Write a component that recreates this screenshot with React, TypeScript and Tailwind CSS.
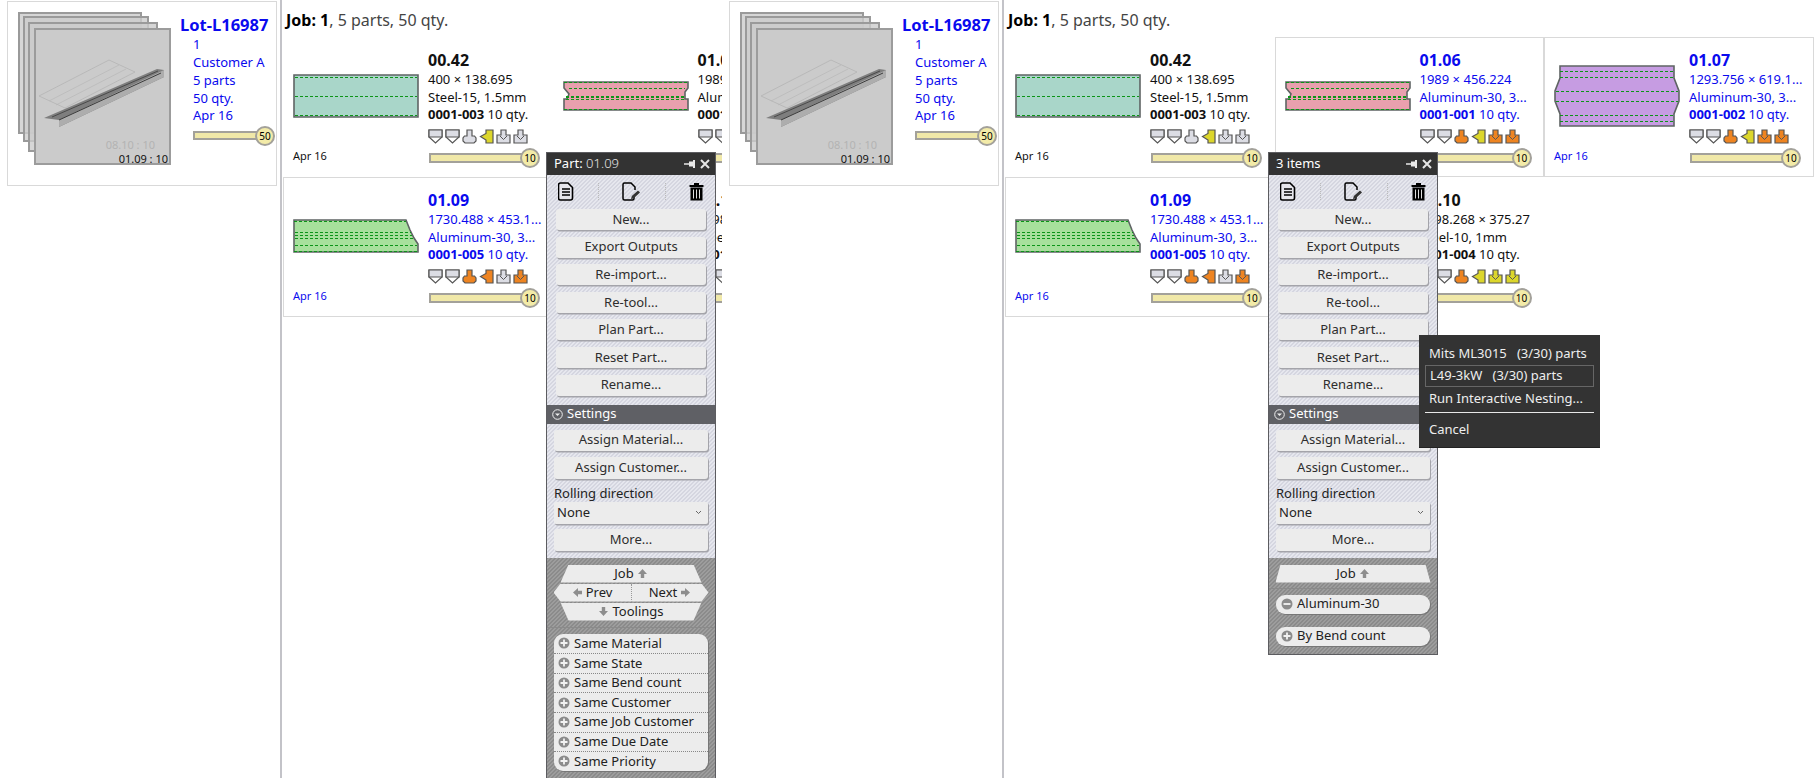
import React from "react";

const BLUE = "text-[#0a0aee]";

type ToolKind = "v" | "u" | "l" | "d";
const COLORS = { g: "#dcdde4", o: "#ee8421", y: "#dcd62c" };
type ToolColor = keyof typeof COLORS;

function Tool({ kind, color }: { kind: ToolKind; color: ToolColor }) {
  const fill = COLORS[color];
  return (
    <svg width="15" height="15" viewBox="0 0 15 15" className="shrink-0">
      {kind === "v" && (
        <>
          <path d="M1 1H14V8L7.5 14L1 8Z" fill="#fff" stroke="#555" strokeWidth="1.2" />
          <path d="M1 1H14V8H1Z" fill={fill} stroke="#555" strokeWidth="1.2" />
        </>
      )}
      {kind === "u" && (
        <path d="M5 1H10V7H12.5L14 9V12L12 14H3L1 12V9L2.5 7H5Z" fill={fill} stroke="#555" strokeWidth="1.2" />
      )}
      {kind === "l" && (
        <path d="M14 1H7V4.5L1.5 7.5L7 11V14H14Z" fill={fill} stroke="#555" strokeWidth="1.2" />
      )}
      {kind === "d" && (
        <>
          <path d="M5 1H10V6H14V14H1V6H5Z" fill={fill} stroke="#555" strokeWidth="1.2" />
          <path d="M4 7L7.5 10.5L11 7" fill="none" stroke="#555" strokeWidth="1" />
        </>
      )}
    </svg>
  );
}

function Slider({ value }: { value: number }) {
  return (
    <div className="relative ml-px h-[10px] w-[103px] border-2 border-[#a3a19a] bg-[#f0e8a8]">
      <div className="absolute right-[-10px] top-[-7px] flex h-[20px] w-[20px] items-center justify-center rounded-full border-2 border-[#a3a19a] bg-[#f3eba8] text-[10px] text-black">
        {value}
      </div>
    </div>
  );
}

type CardData = {
  name: string;
  dims: string;
  mat: string;
  id: string;
  tools: [ToolKind, ToolColor][];
  thumb: { h: number; points: string; fill: string; dashes: [number, number, number][] };
};

const gv: [ToolKind, ToolColor][] = [["v", "g"], ["v", "g"]];

const CARD_042: CardData = {
  name: "00.42",
  dims: "400 × 138.695",
  mat: "Steel-15, 1.5mm",
  id: "0001-003",
  tools: [...gv, ["u", "g"], ["l", "y"], ["d", "g"], ["d", "g"]],
  thumb: {
    h: 44,
    points: "1,1 125,1 125,43 1,43",
    fill: "#a9d6c9",
    dashes: [[2, 124, 3], [2, 124, 22], [2, 124, 41]],
  },
};
const CARD_106: CardData = {
  name: "01.06",
  dims: "1989 × 456.224",
  mat: "Aluminum-30, 3...",
  id: "0001-001",
  tools: [...gv, ["u", "o"], ["l", "y"], ["d", "o"], ["d", "o"]],
  thumb: {
    h: 30,
    points: "1,1 125,1 125,7 122,11 122,18 125,18 125,29 1,29 1,18 4,18 6,13 1,7",
    fill: "#e9a0ae",
    dashes: [[1, 125, 1], [6, 122, 7], [3, 123, 15], [3, 123, 16], [3, 123, 18], [1, 125, 28]],
  },
};
const CARD_107: CardData = {
  name: "01.07",
  dims: "1293.756 × 619.1...",
  mat: "Aluminum-30, 3...",
  id: "0001-002",
  tools: [...gv, ["u", "o"], ["l", "y"], ["d", "o"], ["d", "o"]],
  thumb: {
    h: 62,
    points: "6,1 120,1 120,13 125,26 125,36 120,49 120,61 6,61 6,49 1,36 1,26 6,13",
    fill: "#c69ce2",
    dashes: [[6, 120, 6], [6, 120, 12], [2, 124, 26], [2, 124, 36], [6, 120, 50], [6, 120, 56]],
  },
};
const CARD_109: CardData = {
  name: "01.09",
  dims: "1730.488 × 453.1...",
  mat: "Aluminum-30, 3...",
  id: "0001-005",
  tools: [...gv, ["u", "o"], ["l", "o"], ["d", "g"], ["d", "o"]],
  thumb: {
    h: 34,
    points: "1,1 113,1 117,11 121,19 125,25 125,33 1,33",
    fill: "#a7e09c",
    dashes: [[1, 113, 2], [2, 118, 13], [2, 119, 16], [2, 120, 19], [2, 124, 26], [1, 124, 32]],
  },
};
const CARD_110: CardData = {
  name: "01.10",
  dims: "1598.268 × 375.27",
  mat: "Steel-10, 1mm",
  id: "0001-004",
  tools: [...gv, ["u", "o"], ["l", "y"], ["d", "y"], ["d", "y"]],
  thumb: {
    h: 40,
    points: "1,1 125,1 125,39 1,39",
    fill: "#f0d98a",
    dashes: [[2, 124, 10], [2, 124, 30]],
  },
};

function Thumb({ t }: { t: CardData["thumb"] }) {
  return (
    <svg width="126" height={t.h} viewBox={`0 0 126 ${t.h}`}>
      <polygon points={t.points} fill={t.fill} stroke="#5f6464" strokeWidth="1.6" />
      {t.dashes.map(([a, b, y], i) => (
        <line key={i} x1={a} x2={b} y1={y + 0.5} y2={y + 0.5} stroke="#0c9418" strokeWidth="1" strokeDasharray="3 2" />
      ))}
    </svg>
  );
}

function Card({ c, selected }: { c: CardData; selected?: boolean }) {
  const tone = selected ? BLUE : "text-[#111]";
  return (
    <div
      className={`flex h-[140px] w-[269.5px] border pl-[9px] pt-[5px] ${selected ? "border-[#d9d9d9]" : "border-transparent"} ${tone}`}
    >
      <div className="flex w-[135px] shrink-0 flex-col">
        <div className="flex h-[106px] w-[126px] items-center">
          <Thumb t={c.thumb} />
        </div>
        <div className="h-[14px] text-[11px] leading-[14px]">Apr 16</div>
      </div>
      <div className="-mt-[5px] flex w-[120px] flex-col whitespace-nowrap pt-[12px] text-[13px]">
        <div className="h-[20px] text-[16px] font-bold leading-[20px]">{c.name}</div>
        <div className="h-[18px] leading-[18px]">{c.dims}</div>
        <div className="h-[18px] leading-[18px]">{c.mat}</div>
        <div className="h-[17px] leading-[17px]">
          <b className="font-bold">{c.id}</b> 10 qty.
        </div>
        <div className="mt-[6px] flex h-[15px] gap-[2px]">
          {c.tools.map(([k, col], i) => (
            <Tool key={i} kind={k} color={col} />
          ))}
        </div>
        <div className="mt-[9px]">
          <Slider value={10} />
        </div>
      </div>
    </div>
  );
}

function LotCard() {
  const sheets = [
    "left-[10px] top-[10px] h-[122px] w-[124px]",
    "left-[15px] top-[14px] h-[126px] w-[126px]",
    "left-[20px] top-[20px] h-[130px] w-[130px]",
  ];
  return (
    <div className="relative flex h-[185px] w-[270px] border border-[#d9d9d9]">
      {sheets.map((s) => (
        <div key={s} className={`absolute border-2 border-[#9a9a9a] bg-[#cccccc]/80 ${s}`} />
      ))}
      <div className="absolute left-[26px] top-[26px] h-[137px] w-[137px] border-2 border-[#9c9c9c] bg-[#cbcbcb]">
        <svg width="133" height="133" viewBox="0 0 133 133" className="absolute left-0 top-0">
          <polygon points="3,66 73,30 99,42 29,78" fill="none" stroke="#b4b4b4" strokeWidth="0.8" />
          <line x1="13" y1="71" x2="83" y2="35" stroke="#b8b8b8" strokeWidth="0.7" />
          <line x1="20" y1="75" x2="90" y2="39" stroke="#b8b8b8" strokeWidth="0.7" />
          <polygon points="8,88 121,39 128,40 128,47 23,97 23,90" fill="#7e7e7e" />
          <polygon points="23,90 128,40 128,47 23,97" fill="#adadad" />
          <polyline points="16,87 122,41" stroke="#4a4a4a" strokeWidth="1" fill="none" />
          <polyline points="23,90 125,43" stroke="#3b3b3b" strokeWidth="1" fill="none" />
        </svg>
        <div className="absolute right-[14px] top-[108px] text-[11px] leading-[14px] text-[#b3b3b3]">08.10 : 10</div>
        <div className="absolute right-[1px] top-[122px] text-[11px] leading-[14px] text-[#111]">01.09 : 10</div>
      </div>
      <div className={`ml-[172px] flex flex-col whitespace-nowrap pt-[13px] text-[13px] ${BLUE}`}>
        <div className="h-[20px] text-[16.5px] font-bold leading-[20px]">Lot-L16987</div>
        <div className="ml-[13px] flex flex-col leading-[18px]">
          <div className="h-[18px]">1</div>
          <div className="h-[18px]">Customer A</div>
          <div className="h-[18px]">5 parts</div>
          <div className="h-[17px]">50 qty.</div>
          <div className="h-[18px]">Apr 16</div>
          <div className="mt-[7px] w-[74px]">
            <div className="relative h-[9px] w-[74px] border-2 border-[#a3a19a] bg-[#f0e8a8]">
              <div className="absolute right-[-10px] top-[-7px] flex h-[20px] w-[20px] items-center justify-center rounded-full border-2 border-[#a3a19a] bg-[#f3eba8] text-[10px] text-black">
                50
              </div>
            </div>
          </div>
        </div>
      </div>
    </div>
  );
}

function Btn({ label, className = "" }: { label: string; className?: string }) {
  return (
    <div
      className={`flex h-[21px] items-center justify-center rounded-[3px] bg-[#ececec] text-[13px] text-[#2e2e2e] shadow-[1px_1.5px_0_#a4a4aa] ${className}`}
    >
      {label}
    </div>
  );
}

function Arrow({ dir }: { dir: "up" | "down" | "left" | "right" }) {
  const rot = { up: "", down: "rotate-180", left: "-rotate-90", right: "rotate-90" }[dir];
  return (
    <svg width="11" height="11" viewBox="0 0 11 11" className={rot}>
      <path d="M5.5 1L10 6H7.2V10H3.8V6H1Z" fill="#8d8d8d" />
    </svg>
  );
}

function PlusDot({ minus }: { minus?: boolean }) {
  return (
    <svg width="12" height="12" viewBox="0 0 12 12" className="shrink-0">
      <circle cx="6" cy="6" r="5.5" fill="#8b8b8b" />
      <path d={minus ? "M2.5 6H9.5" : "M2.5 6H9.5M6 2.5V9.5"} stroke="#f2f2f2" strokeWidth="1.8" />
    </svg>
  );
}

function DocIcon() {
  return (
    <svg width="16" height="19" viewBox="0 0 16 19">
      <path d="M2.5 1H10L14.5 5.5V16a2 2 0 0 1-2 2h-10a2 2 0 0 1-2-2V3a2 2 0 0 1 2-2Z" fill="#e6e6ec" stroke="#000" strokeWidth="1.6" />
      <path d="M4 7H12M4 10H12M4 13H12" stroke="#000" strokeWidth="1.4" />
    </svg>
  );
}
function EditIcon() {
  return (
    <svg width="19" height="19" viewBox="0 0 19 19">
      <path d="M12 14V16.5a1.5 1.5 0 0 1-1.5 1.5H2.5A1.5 1.5 0 0 1 1 16.5V2.5A1.5 1.5 0 0 1 2.5 1H9L13 5V8" fill="none" stroke="#000" strokeWidth="1.5" />
      <path d="M9 17L9.8 14L16 8.5L18 10.5L11.5 16.5Z" fill="#333" />
    </svg>
  );
}
function TrashIcon() {
  return (
    <svg width="15" height="19" viewBox="0 0 15 19">
      <path d="M0.5 3H14.5V5H0.5ZM5 1H10V3H5Z" fill="#000" />
      <path d="M1.5 5.5H13.5V18.5H1.5Z" fill="#000" />
      <path d="M4.5 7.5V16.5M7.5 7.5V16.5M10.5 7.5V16.5" stroke="#ddd" strokeWidth="1" />
    </svg>
  );
}

const NAV_BTNS = ["New...", "Export Outputs", "Re-import...", "Re-tool...", "Plan Part...", "Reset Part...", "Rename..."];
const SAME = ["Same Material", "Same State", "Same Bend count", "Same Customer", "Same Job Customer", "Same Due Date", "Same Priority"];

function Panel({ title, dim, multi, left }: { title: string; dim?: string; multi?: boolean; left: string }) {
  return (
    <div className={`absolute top-[152px] w-[170px] border border-[#5c5c60] font-['Noto_Sans',sans-serif] ${left}`}>
      <div className="flex h-[22px] items-center justify-between bg-[#333333] pl-[7px] pr-[5px] text-[13px] text-white">
        <span>
          {title}
          {dim && <span className="font-light text-[#e8e8e8]"> {dim}</span>}
        </span>
        <span className="flex items-center gap-[4px]">
          <svg width="12" height="10" viewBox="0 0 12 10">
            <path d="M0 4.3H5V2.5H9V1H11V9H9V7.5H5V5.7H0Z" fill="#e8e8e8" />
          </svg>
          <svg width="10" height="10" viewBox="0 0 10 10">
            <path d="M1 1L9 9M9 1L1 9" stroke="#e6e6e6" strokeWidth="2" />
          </svg>
        </span>
      </div>
      <div className="bg-[repeating-linear-gradient(135deg,#d5d6e0_0,#d5d6e0_1.414px,#e6e7ee_1.414px,#e6e7ee_2.828px)] px-[9px] pb-[9px] pt-[7px]">
        <div className="flex h-[19px] items-center justify-between px-[2px]">
          <DocIcon />
          <div className="h-[17px] border-l border-dotted border-[#bbb]" />
          <EditIcon />
          <div className="h-[17px] border-l border-dotted border-[#bbb]" />
          <TrashIcon />
        </div>
        <div className="mt-[8px] flex flex-col gap-[6.6px]">
          {NAV_BTNS.map((b) => (
            <Btn key={b} label={b} />
          ))}
        </div>
      </div>
      <div className="flex h-[19px] items-center gap-[4px] bg-[#5f6065] pl-[5px] text-[13px] text-white">
        <svg width="11" height="11" viewBox="0 0 11 11">
          <circle cx="5.5" cy="5.5" r="4.8" fill="none" stroke="#eee" strokeWidth="1" />
          <path d="M3 4.5L5.5 7L8 4.5Z" fill="#eee" />
        </svg>
        Settings
      </div>
      <div className="flex h-[134px] flex-col bg-[repeating-linear-gradient(135deg,#d5d6e0_0,#d5d6e0_1.414px,#e6e7ee_1.414px,#e6e7ee_2.828px)] px-[7px] pt-[6px]">
        <Btn label="Assign Material..." />
        <Btn label="Assign Customer..." className="mt-[6px] h-[22px]" />
        <div className="mt-[5px] h-[18px] text-[13px] leading-[18px] text-[#222]">Rolling direction</div>
        <div className="flex h-[22px] items-center justify-between rounded-[2px] bg-[#ececec] pl-[3px] pr-[6px] text-[13px] text-[#222] shadow-[1px_1.5px_0_#a4a4aa]">
          None
          <svg width="7" height="5" viewBox="0 0 7 5">
            <path d="M1 1L3.5 3.5L6 1" fill="none" stroke="#666" strokeWidth="1" />
          </svg>
        </div>
        <Btn label="More..." className="mt-[5px] h-[22px]" />
      </div>
      <div className="bg-[repeating-linear-gradient(135deg,#8b8b8b_0,#8b8b8b_1.414px,#9d9d9d_1.414px,#9d9d9d_2.828px)]">
        <div className={`border-b border-[#8a8a8a] pt-[7px] ${multi ? "h-[31px]" : "h-[70px]"}`}>
          {multi ? (
            <div className="mx-auto flex h-[18px] w-[155px] items-center justify-center gap-[3px] bg-[#ececec] text-[13px] text-[#222] [clip-path:polygon(5px_0,150px_0,155px_100%,0_100%)]">
              Job <Arrow dir="up" />
            </div>
          ) : (
            <div className="flex flex-col items-center gap-px text-[13px] text-[#222]">
              <div className="flex h-[18px] w-[141px] items-center justify-center gap-[3px] bg-[#ececec] [clip-path:polygon(8px_0,133px_0,141px_100%,0_100%)]">
                Job <Arrow dir="up" />
              </div>
              <div className="flex h-[18px] w-[155px] bg-[#ececec] [clip-path:polygon(7px_0,148px_0,155px_50%,148px_100%,7px_100%,0_50%)]">
                <div className="flex flex-1 items-center justify-center gap-[3px] border-r border-dotted border-[#999]">
                  <Arrow dir="left" /> Prev
                </div>
                <div className="flex flex-1 items-center justify-center gap-[3px]">
                  Next <Arrow dir="right" />
                </div>
              </div>
              <div className="flex h-[18px] w-[141px] items-center justify-center gap-[3px] bg-[#ececec] [clip-path:polygon(0_0,141px_0,133px_100%,8px_100%)]">
                <Arrow dir="down" /> Toolings
              </div>
            </div>
          )}
        </div>
        {multi ? (
          <div className="flex flex-col gap-[13px] px-[7px] pb-[8px] pt-[6px] text-[13px] text-[#222]">
            <div className="flex h-[19px] items-center gap-[4px] rounded-[9px] bg-[#ececec] pl-[5px] shadow-[1px_1px_0_#777]">
              <PlusDot minus /> Aluminum-30
            </div>
            <div className="flex h-[19px] items-center gap-[4px] rounded-[9px] bg-[#ececec] pl-[5px] shadow-[1px_1px_0_#777]">
              <PlusDot /> By Bend count
            </div>
          </div>
        ) : (
          <div className="px-[7px] pb-[8px] pt-[6px]">
            <div className="overflow-hidden rounded-[9px] bg-[#ececec] text-[13px] text-[#222] shadow-[1px_1px_0_#777]">
              {SAME.map((s, i) => (
                <div
                  key={s}
                  className={`flex h-[19.6px] items-center gap-[4px] pl-[4px] ${i > 0 ? "border-t border-dotted border-[#888]" : ""}`}
                >
                  <PlusDot /> {s}
                </div>
              ))}
            </div>
          </div>
        )}
      </div>
    </div>
  );
}

function Menu() {
  return (
    <div className="absolute left-[697px] top-[335px] flex h-[113px] w-[181px] flex-col border-b border-[#222] bg-[#333333] px-[6px] pt-[8px] font-['Noto_Sans',sans-serif] text-[13px] text-[#eeeeee]">
      <div className="flex h-[22px] items-center pl-[4px]">Mits ML3015&nbsp;&nbsp; (3/30) parts</div>
      <div className="flex h-[22px] items-center border border-[#666] pl-[4px]">L49-3kW&nbsp;&nbsp; (3/30) parts</div>
      <div className="flex h-[23px] items-center pl-[4px]">Run Interactive Nesting...</div>
      <div className="mt-[2px] h-px bg-[#e8e8e8]" />
      <div className="flex h-[33px] items-center pl-[4px]">Cancel</div>
    </div>
  );
}

function Half({
  grid,
  className,
  children,
}: {
  grid: [CardData, boolean][];
  className: string;
  children: React.ReactNode;
}) {
  return (
    <div className={`relative flex h-[778px] shrink-0 overflow-hidden ${className}`}>
      <div className="w-[279.5px] shrink-0 pl-[7px] pt-px">
        <LotCard />
      </div>
      <div className="h-[778px] w-[2px] shrink-0 bg-[#c3c3c8]" />
      <div className="flex min-w-0 flex-1 flex-col pl-[1.5px]">
        <div className="h-[36px] pl-[3px] pt-[9px] text-[16px] leading-[22px] text-[#444]">
          <b className="font-bold text-black">Job: 1</b>, 5 parts, 50 qty.
        </div>
        <div className="grid grid-cols-[repeat(3,269.5px)] pt-px">
          {grid.map(([c, sel]) => (
            <Card key={c.name} c={c} selected={sel} />
          ))}
        </div>
      </div>
      {children}
    </div>
  );
}

export default function App() {
  return (
    <div className="flex h-[778px] w-[1816px] overflow-hidden bg-white font-['Noto_Sans',sans-serif]">
      <Half
        className="w-[722px]"
        grid={[
          [CARD_042, false],
          [CARD_106, false],
          [CARD_107, false],
          [CARD_109, true],
          [CARD_110, false],
        ]}
      >
        <Panel title="Part:" dim="01.09" left="left-[546px]" />
      </Half>
      <Half
        className="w-[1094px]"
        grid={[
          [CARD_042, false],
          [CARD_106, true],
          [CARD_107, true],
          [CARD_109, true],
          [CARD_110, false],
        ]}
      >
        <Panel title="3 items" multi left="left-[546px]" />
        <Menu />
      </Half>
    </div>
  );
}
